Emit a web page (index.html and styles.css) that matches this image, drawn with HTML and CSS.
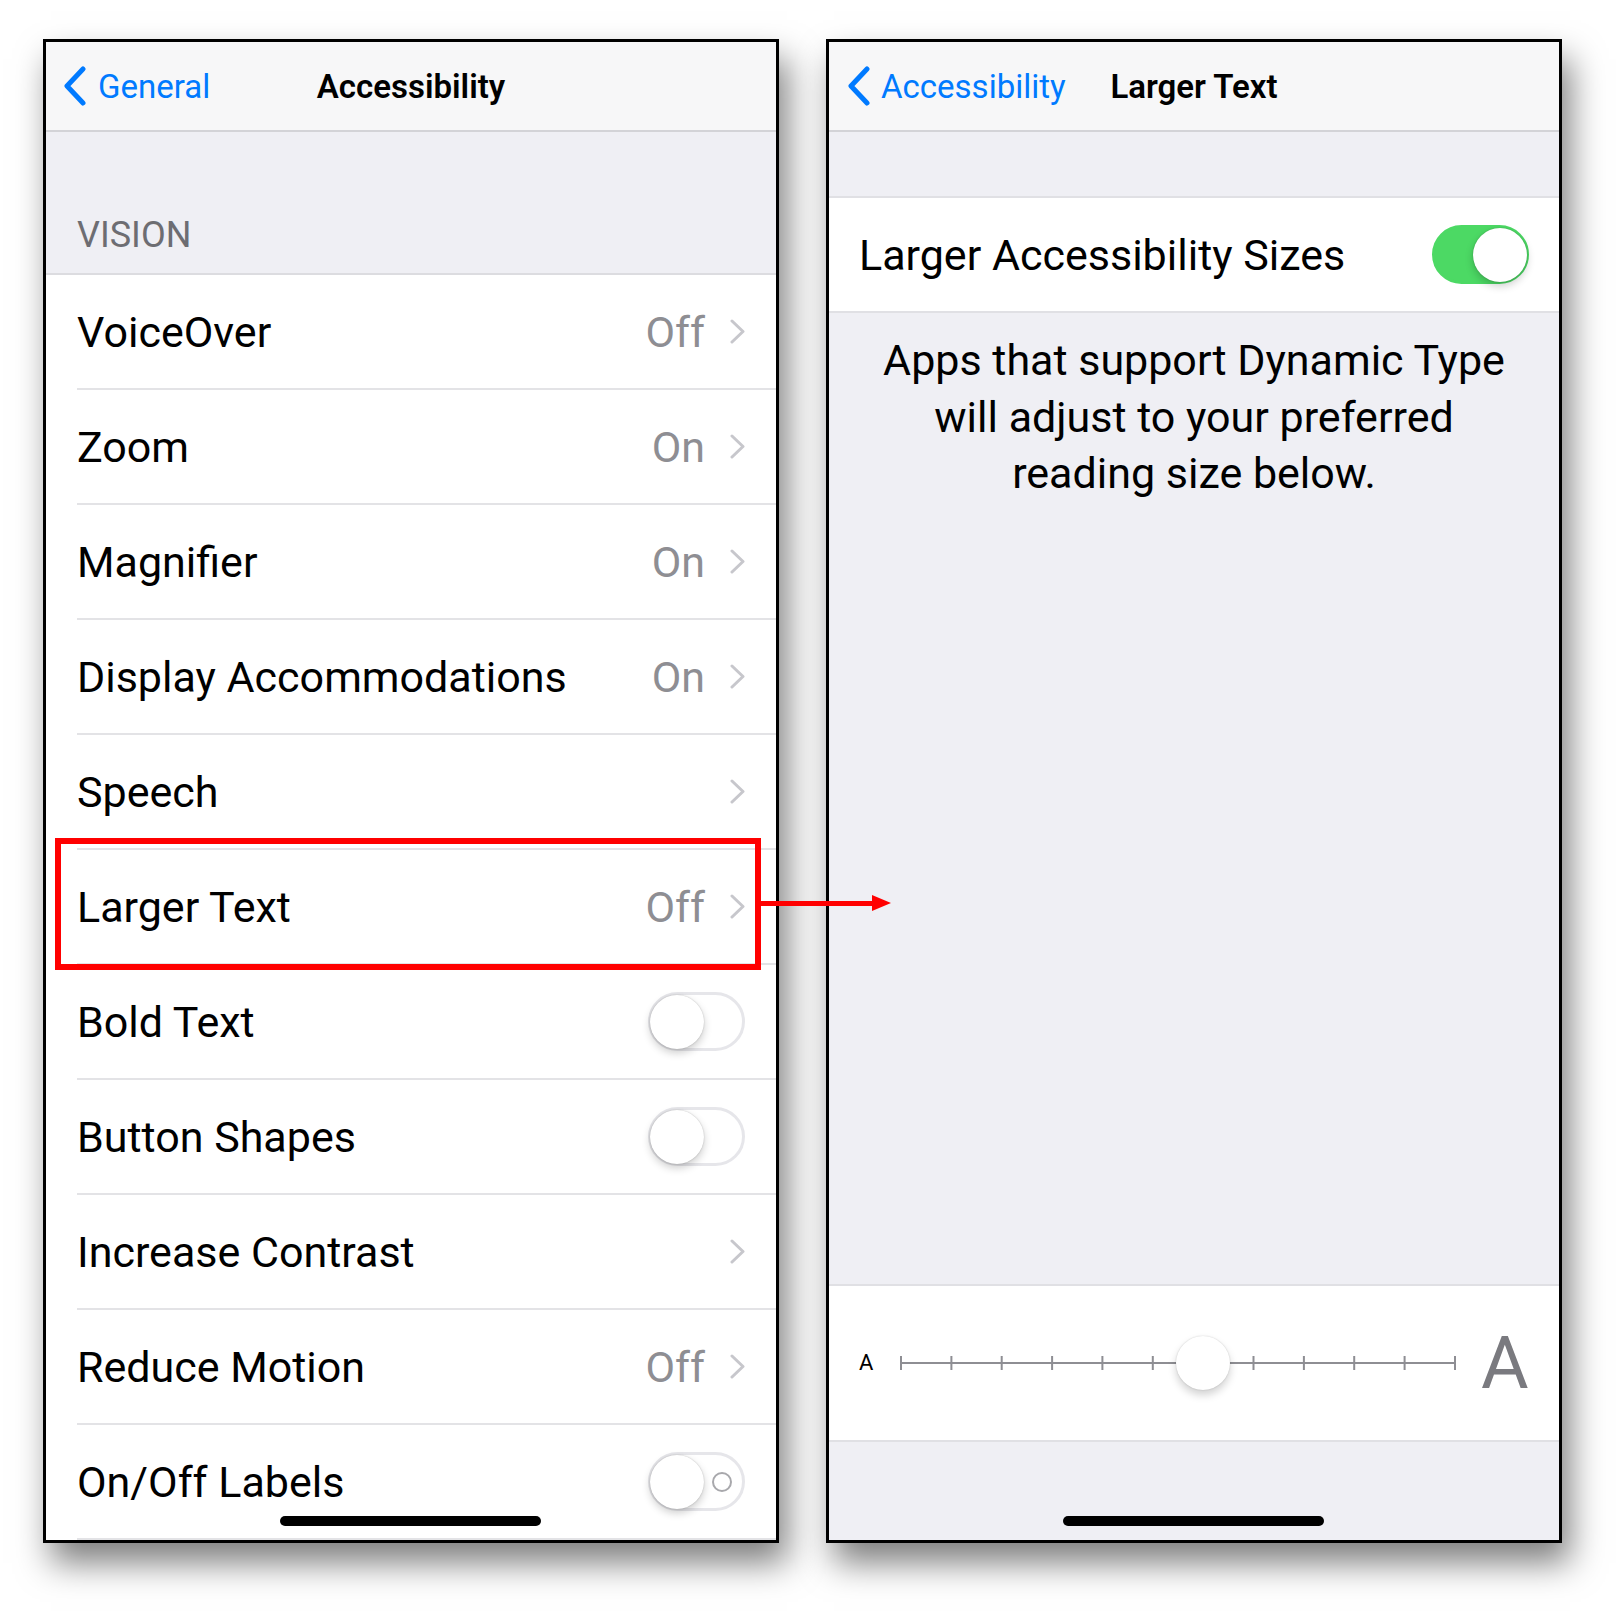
FILE: index.html
```html
<!DOCTYPE html>
<html lang="en">
<head>
<meta charset="utf-8">
<title>Accessibility – Larger Text</title>
<link rel="stylesheet" href="styles.css">
</head>
<body>
<div class="stage">
  <section class="phone phone-left">
    <header class="nav">
      <div class="back">
        <svg class="back-chevron" viewBox="0 0 24 40"><path d="M20 3 L4 20 L20 37" /></svg>
        <span>General</span>
      </div>
      <div class="nav-title">Accessibility</div>
      <div></div>
    </header>
    <div class="group-header">VISION</div>
    <ul class="list">
      <li class="row"><span class="label">VoiceOver</span><span class="value">Off</span><svg class="chev" viewBox="0 0 15 25"><path d="M2 2 L13 12.5 L2 23"/></svg></li>
      <li class="row"><span class="label">Zoom</span><span class="value">On</span><svg class="chev" viewBox="0 0 15 25"><path d="M2 2 L13 12.5 L2 23"/></svg></li>
      <li class="row"><span class="label">Magnifier</span><span class="value">On</span><svg class="chev" viewBox="0 0 15 25"><path d="M2 2 L13 12.5 L2 23"/></svg></li>
      <li class="row"><span class="label">Display Accommodations</span><span class="value">On</span><svg class="chev" viewBox="0 0 15 25"><path d="M2 2 L13 12.5 L2 23"/></svg></li>
      <li class="row"><span class="label">Speech</span><svg class="chev" viewBox="0 0 15 25"><path d="M2 2 L13 12.5 L2 23"/></svg></li>
      <li class="row"><span class="label">Larger Text</span><span class="value">Off</span><svg class="chev" viewBox="0 0 15 25"><path d="M2 2 L13 12.5 L2 23"/></svg></li>
      <li class="row"><span class="label">Bold Text</span><span class="switch"><span class="knob"></span></span></li>
      <li class="row"><span class="label">Button Shapes</span><span class="switch"><span class="knob"></span></span></li>
      <li class="row"><span class="label">Increase Contrast</span><svg class="chev" viewBox="0 0 15 25"><path d="M2 2 L13 12.5 L2 23"/></svg></li>
      <li class="row"><span class="label">Reduce Motion</span><span class="value">Off</span><svg class="chev" viewBox="0 0 15 25"><path d="M2 2 L13 12.5 L2 23"/></svg></li>
      <li class="row"><span class="label">On/Off Labels</span><span class="switch switch-labels"><span class="knob"></span><span class="ring"></span></span></li>
    </ul>
    <div class="home-bar"></div>
  </section>

  <section class="phone phone-right">
    <header class="nav">
      <div class="back back-right">
        <svg class="back-chevron" viewBox="0 0 24 40"><path d="M20 3 L4 20 L20 37" /></svg>
        <span>Accessibility</span>
      </div>
      <div class="nav-title">Larger Text</div>
      <div></div>
    </header>
    <div class="spacer"></div>
    <div class="toggle-row">
      <span class="label">Larger Accessibility Sizes</span>
      <span class="switch switch-on"><span class="knob"></span></span>
    </div>
    <p class="footer-text">Apps that support Dynamic Type<br>will adjust to your preferred<br>reading size below.</p>
    <div class="filler"></div>
    <div class="slider-row">
      <span class="a-small">A</span>
      <div class="track">
        <svg class="track-svg" viewBox="0 0 556 16">
          <path d="M1 8 H555 M1 1 V15 M51.4 1 V15 M101.7 1 V15 M152.1 1 V15 M202.4 1 V15 M252.8 1 V15 M303.2 1 V15 M353.5 1 V15 M403.9 1 V15 M454.2 1 V15 M504.6 1 V15 M555 1 V15"/>
        </svg>
        <span class="slider-knob"></span>
      </div>
      <span class="a-big">A</span>
    </div>
    <div class="bottom-pad"></div>
    <div class="home-bar"></div>
  </section>

  <div class="highlight"></div>
  <div class="arrow"></div>
</div>
</body>
</html>
```

FILE: styles.css
```css
* { box-sizing: border-box; }

body {
  margin: 0;
  background: #ffffff;
  font-family: Roboto, "Liberation Sans", Arial, sans-serif;
  color: #000;
}

.stage {
  position: relative;
  display: flex;
  align-items: flex-start;
  gap: 47px;
  padding: 39px 0 0 43px;
  width: 1616px;
  height: 1612px;
}

.phone {
  position: relative;
  flex: none;
  width: 736px;
  height: 1504px;
  border: 3px solid #000;
  overflow: hidden;
  display: flex;
  flex-direction: column;
  background: #efeff4;
  box-shadow: 8px 20px 32px rgba(0, 0, 0, 0.5);
}

.phone-left { background: #fff; }

/* navigation bar */
.nav {
  flex: none;
  height: 90px;
  border-bottom: 2px solid #d3d3d7;
  background: #f7f7f8;
  display: grid;
  grid-template-columns: 1fr auto 1fr;
  align-items: center;
}

.back {
  display: flex;
  align-items: center;
  gap: 11px;
  padding-left: 17px;
  color: #007aff;
  font-size: 33px;
  white-space: nowrap;
}

.back-right { padding-left: 18px; gap: 10px; }

.back-chevron {
  width: 24px;
  height: 40px;
  flex: none;
}
.back-chevron path {
  fill: none;
  stroke: #007aff;
  stroke-width: 5;
  stroke-linecap: round;
  stroke-linejoin: round;
}

.nav-title {
  font-size: 33px;
  font-weight: 600;
  white-space: nowrap;
}

/* grouped list */
.group-header {
  flex: none;
  height: 143px;
  border-bottom: 2px solid #dcdce0;
  background: #efeff4;
  display: flex;
  align-items: flex-end;
  padding: 0 0 20px 31px;
  font-size: 36px;
  line-height: 1;
  color: #6d6d72;
}

.list {
  list-style: none;
  margin: 0;
  padding: 0;
  background: #fff;
}

.row {
  display: flex;
  align-items: center;
  height: 115px;
  margin-left: 31px;
  padding-right: 31px;
  border-bottom: 2px solid #e3e3e6;
  font-size: 43px;
}

.label {
  flex: 1;
  white-space: nowrap;
}

.value {
  color: #8e8e93;
  margin-right: 25px;
}

.chev {
  width: 15px;
  height: 25px;
  flex: none;
}
.chev path {
  fill: none;
  stroke: #c7c7cc;
  stroke-width: 3;
  stroke-linecap: round;
  stroke-linejoin: round;
}

/* switches */
.switch {
  flex: none;
  width: 97px;
  height: 59px;
  border-radius: 30px;
  border: 3px solid #e6e6ea;
  background: #fff;
  display: flex;
  align-items: center;
  justify-content: space-between;
}

.knob {
  flex: none;
  width: 54px;
  height: 54px;
  margin-left: -1px;
  border-radius: 50%;
  background: #fff;
  box-shadow: 0 4px 8px rgba(0, 0, 0, 0.2), 0 0 1.5px rgba(0, 0, 0, 0.25);
}

.ring {
  width: 20px;
  height: 20px;
  margin-right: 10px;
  border-radius: 50%;
  border: 2.5px solid #a8a8ac;
}

.switch-on {
  background: #4cd964;
  border-color: #4cd964;
  justify-content: flex-end;
}
.switch-on .knob { margin-left: 0; margin-right: -1px; }

/* right screen */
.spacer {
  flex: none;
  height: 66px;
  border-bottom: 2px solid #e0e0e4;
}

.toggle-row {
  flex: none;
  height: 115px;
  background: #fff;
  border-bottom: 2px solid #e0e0e4;
  display: flex;
  align-items: center;
  padding: 0 30px;
  font-size: 43px;
}

.footer-text {
  flex: none;
  margin: 19px 0 0;
  padding: 0 20px;
  text-align: center;
  font-size: 43px;
  line-height: 56.5px;
}

.filler { flex: 1; }

.slider-row {
  flex: none;
  height: 158px;
  background: #fff;
  border-top: 2px solid #e0e0e4;
  border-bottom: 2px solid #e0e0e4;
  display: flex;
  align-items: center;
  padding-left: 30px;
}

.a-small {
  font-size: 22px;
  line-height: 1;
  width: 14px;
  margin-right: 27px;
}

.track {
  position: relative;
  flex: none;
  width: 556px;
  height: 16px;
}

.track-svg {
  display: block;
  width: 556px;
  height: 16px;
}
.track-svg path {
  fill: none;
  stroke: #8e8e93;
  stroke-width: 2;
}

.slider-knob {
  position: absolute;
  left: 276px;
  top: -19px;
  width: 54px;
  height: 54px;
  border-radius: 50%;
  background: #fff;
  box-shadow: 0 5px 9px rgba(0, 0, 0, 0.18), 0 0 1.5px rgba(0, 0, 0, 0.2);
}

.a-big {
  font-size: 73px;
  line-height: 1;
  color: #7a7a7f;
  margin-left: 25px;
}

.bottom-pad {
  flex: none;
  height: 98px;
}

.home-bar {
  position: absolute;
  left: calc(50% - 131px);
  bottom: 14px;
  width: 261px;
  height: 10px;
  border-radius: 5px;
  background: #000;
}

/* annotation */
.highlight {
  position: absolute;
  left: 55px;
  top: 838px;
  width: 706px;
  height: 132px;
  border: 6px solid #ff0000;
}

.arrow {
  position: absolute;
  left: 761px;
  top: 901px;
  width: 111px;
  height: 5px;
  background: #ff0000;
}
.arrow::after {
  content: "";
  position: absolute;
  right: -19px;
  top: -6px;
  border-left: 19px solid #ff0000;
  border-top: 8.5px solid transparent;
  border-bottom: 8.5px solid transparent;
}
```
